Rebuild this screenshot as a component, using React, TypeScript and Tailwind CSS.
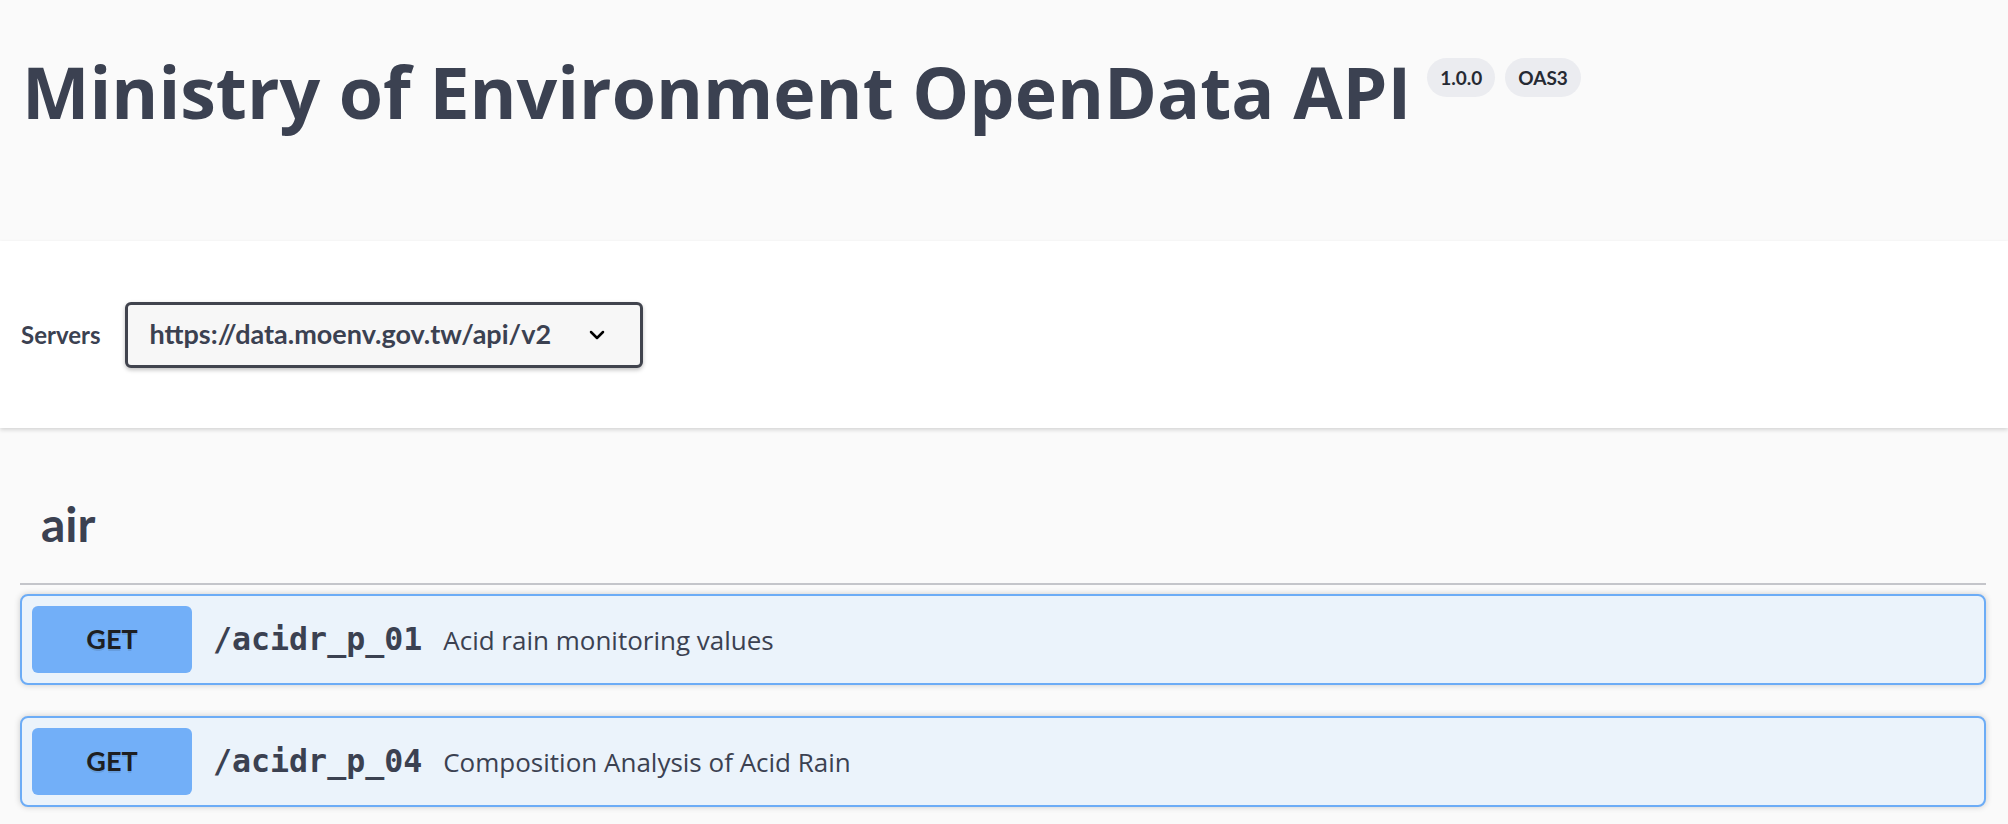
import { ChevronDown } from "lucide-react";

const ops = [
  { method: "GET", path: "/acidr_p_01", summary: "Acid rain monitoring values" },
  { method: "GET", path: "/acidr_p_04", summary: "Composition Analysis of Acid Rain" },
];

function Badge({ children }: { children: string }) {
  return (
    <span className="flex h-[39px] items-center rounded-full bg-[#ebecf0] px-[13px] font-['Lato',sans-serif] text-[19px] font-bold leading-none text-[#262a33]">
      {children}
    </span>
  );
}

function Opblock({ method, path, summary }: { method: string; path: string; summary: string }) {
  return (
    <div className="rounded-[8px] border-2 border-[#6cacf6] bg-[#ebf3fb] shadow-[0_0_6px_rgba(0,0,0,0.19)]">
      <div className="flex items-center px-[10px] py-[10px]">
        <div className="flex h-[67px] w-[160px] items-center justify-center rounded-[6px] bg-[#72aff8] font-['Lato',sans-serif] text-[27px] font-bold text-[#1e1f22] [text-shadow:0_2px_0_rgba(0,0,0,0.1)]">
          {method}
        </div>
        <span className="ml-[21px] font-['DejaVu_Sans_Mono',monospace] text-[31.6px] font-bold leading-none text-[#3b4151]">
          {path}
        </span>
        <span className="ml-[21px] font-['Open_Sans',sans-serif] text-[26px] leading-none text-[#3b4151]">
          {summary}
        </span>
      </div>
    </div>
  );
}

export default function App() {
  return (
    <div className="h-[824px] overflow-hidden bg-[#fafafa] text-[#3b4151]">
      <header className="h-[241px] px-[22px] pt-[56px]">
        <div className="flex items-start">
          <h1 className="font-['Open_Sans',sans-serif] text-[71.6px] font-bold leading-none text-[#3b4151]">
            Ministry of Environment OpenData API
          </h1>
          <div className="ml-[16px] mt-[2px] flex gap-[10px]">
            <Badge>1.0.0</Badge>
            <Badge>OAS3</Badge>
          </div>
        </div>
      </header>

      <section className="flex h-[187px] items-center bg-white px-[21px] shadow-[0_2px_4px_rgba(0,0,0,0.15)]">
        <span className="font-['Lato',sans-serif] text-[24px] font-bold text-[#3b4151]">Servers</span>
        <div className="ml-[25px] flex h-[66px] w-[518px] items-center rounded-[6px] border-[3px] border-[#41444e] bg-[#f7f7f7] pl-[21px] pr-[31px] shadow-[0_2px_4px_rgba(0,0,0,0.25)]">
          <span className="flex-1 font-['Lato',sans-serif] text-[27px] font-bold text-[#3b4151]">
            https://data.moenv.gov.tw/api/v2
          </span>
          <ChevronDown size={24} strokeWidth={2.5} className="text-black" />
        </div>
      </section>

      <main className="pl-[20px] pr-[22px]">
        <h3 className="mt-[72px] border-b-2 border-[#c4c5ca] pb-[35px] pl-[21px] font-['Lato',sans-serif] text-[48px] font-bold leading-none text-[#3b4151]">
          air
        </h3>
        <div className="mt-[9px] flex flex-col gap-[31px]">
          {ops.map((op) => (
            <Opblock key={op.path} {...op} />
          ))}
        </div>
      </main>
    </div>
  );
}
